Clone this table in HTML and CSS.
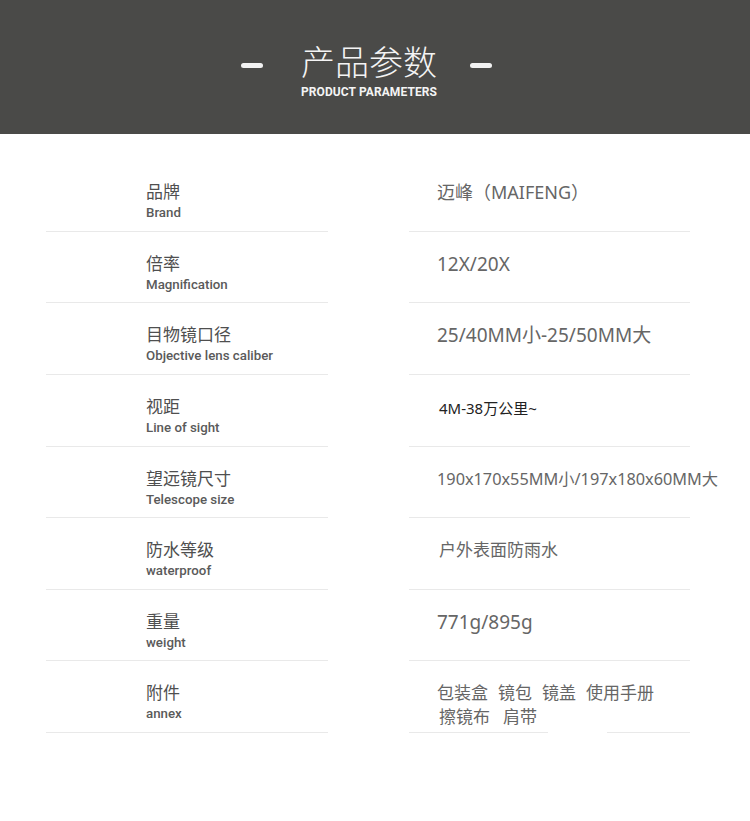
FILE: index.html
```html
<!DOCTYPE html>
<html lang="zh-CN">
	<head>
		<meta charset="UTF-8" />
		<meta name="viewport" content="width=device-width, initial-scale=1.0" />
		<title>产品参数</title>
		<link rel="stylesheet" href="styles.css">
	</head>
	<body>
		<header class="banner">
			<span class="dash"></span>
			<div class="banner-title">
				<h1>产品参数</h1>
				<p>PRODUCT PARAMETERS</p>
			</div>
			<span class="dash"></span>
		</header>
		<main class="params">
			<div class="label"><span class="cn">品牌</span><span class="en">Brand</span></div>
			<div class="value">迈峰（MAIFENG）</div>

			<div class="label"><span class="cn">倍率</span><span class="en">Magnification</span></div>
			<div class="value latin">12X/20X</div>

			<div class="label"><span class="cn">目物镜口径</span><span class="en">Objective lens caliber</span></div>
			<div class="value latin">25/40MM小-25/50MM大</div>

			<div class="label"><span class="cn">视距</span><span class="en">Line of sight</span></div>
			<div class="value small">4M-38万公里~</div>

			<div class="label"><span class="cn">望远镜尺寸</span><span class="en">Telescope size</span></div>
			<div class="value narrow">190x170x55MM小/197x180x60MM大</div>

			<div class="label"><span class="cn">防水等级</span><span class="en">waterproof</span></div>
			<div class="value cjk">户外表面防雨水</div>

			<div class="label"><span class="cn">重量</span><span class="en">weight</span></div>
			<div class="value latin">771g/895g</div>

			<div class="label"><span class="cn">附件</span><span class="en">annex</span></div>
			<div class="value items last">
				<div class="item-line"><span>包装盒</span><span>镜包</span><span>镜盖</span><span>使用手册</span></div>
				<div class="item-line wide"><span>擦镜布</span><span>肩带</span></div>
			</div>
		</main>
	</body>
</html>
```

FILE: styles.css
```css
body {
	margin: 0;
	background: #fff;
	font-family: 'Noto Sans', 'Noto Sans CJK SC', sans-serif;
}
.banner {
	height: 134px;
	box-sizing: border-box;
	background: #4a4a48;
	display: flex;
	justify-content: center;
	align-items: flex-start;
	padding-top: 39px;
	padding-right: 17px;
}
.dash {
	width: 22px;
	height: 5px;
	border-radius: 3px;
	background: #f2f2f2;
	margin-top: 24px;
}
.banner-title {
	text-align: center;
	color: #f4f4f4;
	margin: 0 33px 0 38px;
}
.banner-title h1 {
	margin: 0;
	font-family: 'Noto Sans CJK SC', sans-serif;
	font-weight: 300;
	font-size: 34px;
	line-height: 44px;
}
.banner-title p {
	margin: 1px 0 0 0;
	font-family: Roboto, sans-serif;
	font-weight: 700;
	font-size: 12px;
	line-height: 16px;
	letter-spacing: 0.1px;
}
.params {
	display: grid;
	grid-template-columns: 282px 281px;
	grid-auto-rows: 71.65px;
	column-gap: 81px;
	margin: 26px 0 0 46px;
}
.label,
.value {
	box-sizing: border-box;
	border-bottom: 1px solid #e9e9e9;
}
.label {
	display: flex;
	flex-direction: column;
	padding: 20px 0 0 100px;
}
.label .cn {
	font-family: 'Noto Sans CJK SC', sans-serif;
	font-size: 17px;
	line-height: 22px;
	color: #4f4f4f;
}
.label .en {
	font-family: Roboto, sans-serif;
	font-weight: 500;
	font-size: 13.3px;
	line-height: 18px;
	margin-top: 2px;
	color: #5a5a5a;
}
.value {
	padding: 20px 0 0 28px;
	font-family: 'Noto Sans', 'Noto Sans CJK SC', sans-serif;
	font-size: 18px;
	line-height: 24px;
	color: #666;
	white-space: nowrap;
}
.value.latin {
	font-size: 19px;
}
.value.cjk {
	font-size: 17px;
	padding-left: 30px;
}
.value.small {
	font-size: 15px;
	color: #222;
	padding-top: 21px;
	padding-left: 30px;
}
.value.narrow {
	font-size: 16.3px;
}
.items {
	font-size: 17px;
	line-height: 24px;
	padding-top: 20px;
}
.item-line {
	display: flex;
	gap: 10px;
}
.item-line.wide {
	gap: 13px;
	padding-left: 2px;
}
.value.last {
	border-bottom: none;
	background: linear-gradient(to right, #e9e9e9 139px, transparent 139px, transparent 198px, #e9e9e9 198px) bottom / 100% 1px no-repeat;
}
```
